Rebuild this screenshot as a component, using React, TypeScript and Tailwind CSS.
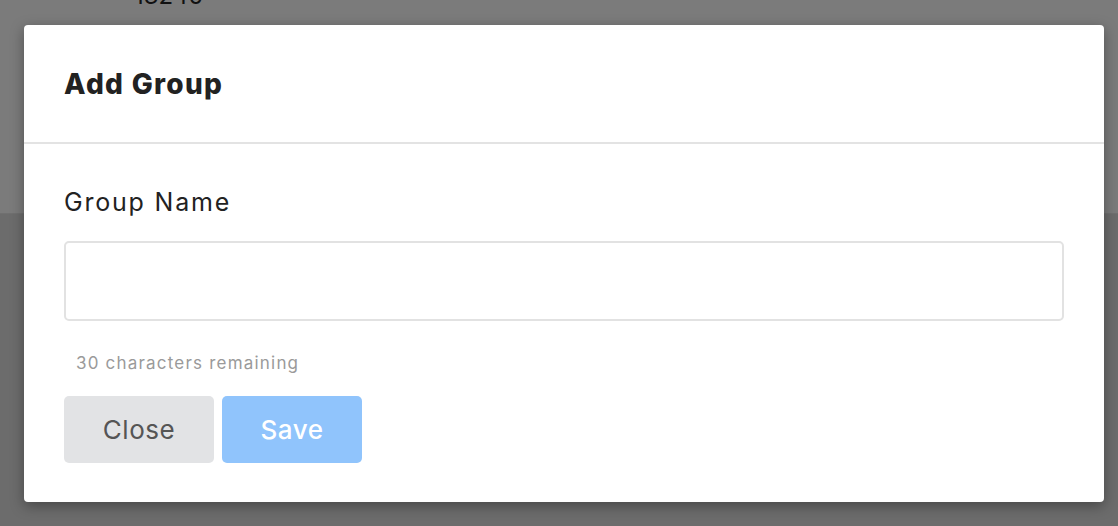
export default function App() {
  return (
    <div className="relative w-[1118px] h-[526px] overflow-hidden bg-[#6c6c6c] font-['Inter',sans-serif]">
      {/* page behind the backdrop */}
      <div className="h-[214px] flex flex-col bg-[#7b7b7b] border-b border-[#707070]">
        <div className="pl-[134px] -mt-[16px] text-[24px] leading-[24px] text-[#111]">13240</div>
      </div>

      {/* modal */}
      <div className="absolute left-[24px] top-[25px] w-[1080px] h-[477px] bg-white rounded-[4px] shadow-[0_4px_14px_rgba(0,0,0,0.35)] flex flex-col">
        <div className="h-[119px] px-10 flex items-center border-b-2 border-[#e3e3e3]">
          <h2 className="text-[28px] font-extrabold text-[#222] tracking-[1.3px]">Add Group</h2>
        </div>
        <div className="px-10 pt-[40px] flex flex-col items-start">
          <label className="text-[25px] leading-[36px] text-[#222] tracking-[1.8px]">Group Name</label>
          <div className="mt-[21px] w-[1000px] h-[80px] border-2 border-[#e2e2e2] rounded-[5px]" />
          <p className="mt-[30px] pl-3 text-[17px] leading-[24px] text-[#9a9a9a] tracking-[1.2px]">30 characters remaining</p>
          <div className="mt-[21px] flex gap-2">
            <button className="w-[150px] h-[67px] rounded-[5px] bg-[#e2e3e5] text-[26px] text-[#555] tracking-[0.5px]">Close</button>
            <button className="w-[140px] h-[67px] rounded-[5px] bg-[#90c4fc] text-[26px] font-medium text-white tracking-[0.5px]">Save</button>
          </div>
        </div>
      </div>
    </div>
  );
}
